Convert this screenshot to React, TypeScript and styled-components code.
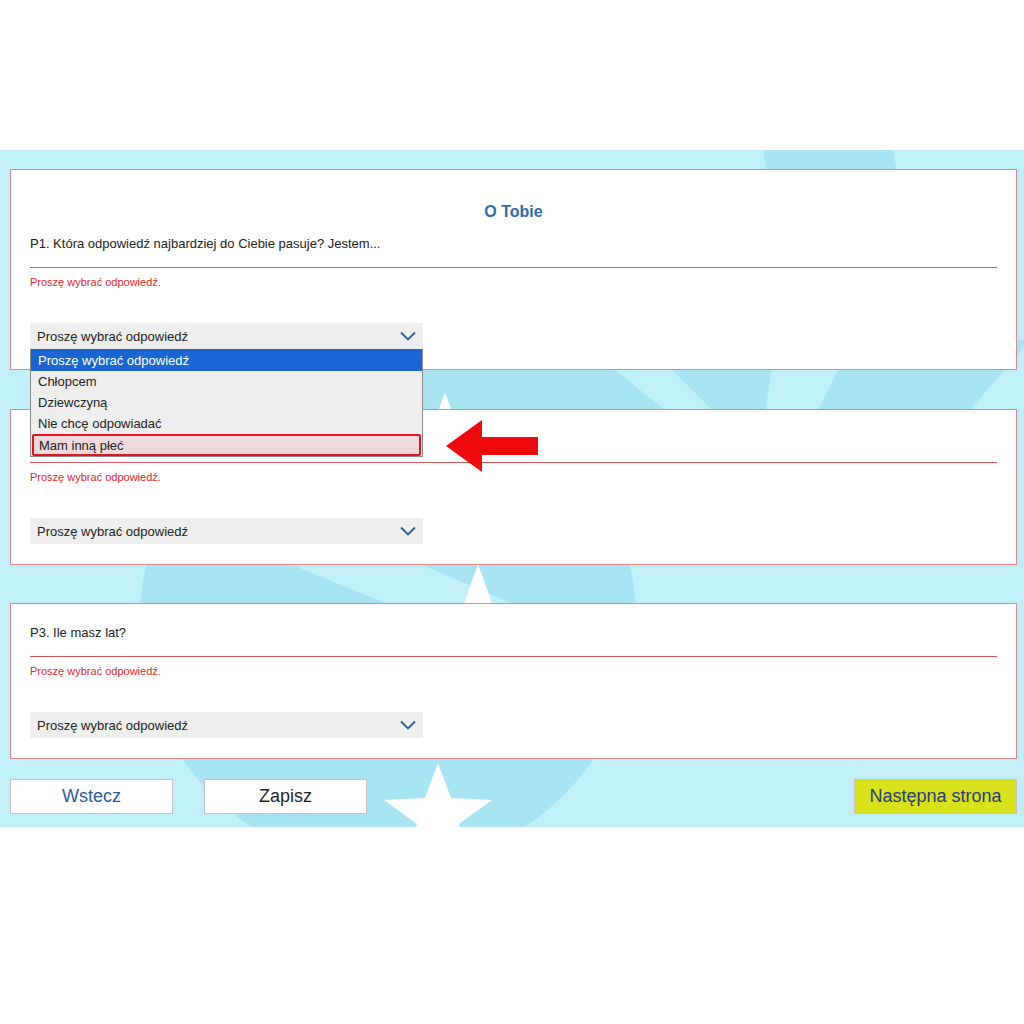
import React from "react";
import styled, { createGlobalStyle } from "styled-components";

const colors = {
  sky: "#c1effa",
  skyDark: "#a8e4f3",
  cardBorder: "#dc868d",
  divider: "#d9545c",
  error: "#e2282c",
  title: "#2f6ba8",
  text: "#222222",
  selectBg: "#eeeeee",
  chevron: "#2b5d97",
  optionActive: "#1a66d3",
};

const GlobalStyle = createGlobalStyle`
  html, body {
    margin: 0;
    padding: 0;
    background: #ffffff;
  }
  body {
    font-family: "Liberation Sans", Arial, sans-serif;
    color: ${colors.text};
  }
`;

const genderOptions = ["Chłopcem", "Dziewczyną", "Nie chcę odpowiadać", "Mam inną płeć"];

function Chevron() {
  return (
    <svg width="16" height="10" viewBox="0 0 16 10">
      <polyline
        points="1,1.5 8,8.5 15,1.5"
        fill="none"
        stroke={colors.chevron}
        strokeWidth="1.8"
      />
    </svg>
  );
}

function Backdrop() {
  // decorative background: soft blobs, light bands and white stars
  return (
    <BackdropSvg viewBox="0 0 1024 677" preserveAspectRatio="none">
      <polygon points="763,0 893,0 900,40 770,40" fill={colors.skyDark} />
      <polygon points="380,190 1030,190 968,262 380,262" fill={colors.skyDark} />
      <circle cx="388" cy="470" r="248" fill={colors.skyDark} />
      <polygon points="612,218 670,218 714,262 668,262" fill={colors.sky} />
      <polygon points="772,218 839,218 817,262 765,262" fill={colors.sky} />
      <polygon points="1010,218 1024,218 1024,262 972,262" fill={colors.sky} />
      <polygon points="285,412 415,412 516,455 390,455" fill={colors.sky} />
      <polygon points="445,242 438,262 452,262" fill="#ffffff" />
      <polygon points="478,414 463,456 493,456" fill="#ffffff" />
      <polygon
        points="438,613 451,648 492,650 459,674 471,714 438,690 405,714 417,674 384,650 425,648"
        fill="#ffffff"
      />
    </BackdropSvg>
  );
}

function SelectField({ open }: { open?: boolean }) {
  return (
    <SelectWrap>
      <SelectBox>
        <span>Proszę wybrać odpowiedź</span>
        <Chevron />
      </SelectBox>
      {open && (
        <OptionList>
          <Option $active>Proszę wybrać odpowiedź</Option>
          {genderOptions.map((o, i) => (
            <Option key={o} $marked={i === genderOptions.length - 1}>
              {o}
            </Option>
          ))}
        </OptionList>
      )}
    </SelectWrap>
  );
}

function Question({
  title,
  text,
  open,
}: {
  title?: string;
  text: string;
  open?: boolean;
}) {
  return (
    <Card>
      {title && <CardTitle>{title}</CardTitle>}
      <QuestionText>{text}</QuestionText>
      <Divider />
      <ErrorText>Proszę wybrać odpowiedź.</ErrorText>
      <SelectField open={open} />
    </Card>
  );
}

export default function App() {
  return (
    <>
      <GlobalStyle />
      <TopSpace />
      <Section>
        <Backdrop />
        <Content>
          <Cards>
            <Question
              title="O Tobie"
              text="P1. Która odpowiedź najbardziej do Ciebie pasuje? Jestem..."
              open
            />
            {/* question text of P2 sits under the open list */}
            <Question text={"\u00a0"} />
            <Question text="P3. Ile masz lat?" />
          </Cards>
          <ButtonRow>
            <NavButton $tone="back">Wstecz</NavButton>
            <NavButton $tone="save">Zapisz</NavButton>
            <NavButton $tone="next">Następna strona</NavButton>
          </ButtonRow>
        </Content>
        <Arrow width="92" height="52" viewBox="0 0 92 52">
          <polygon points="0,26 36,0 36,17 92,17 92,35 36,35 36,52" fill="#ee0a0a" />
        </Arrow>
      </Section>
    </>
  );
}

const TopSpace = styled.div`
  height: 150px;
  background: #ffffff;
`;

const Section = styled.section`
  position: relative;
  background: ${colors.sky};
  padding: 19px 7px 13px 10px;
  overflow: hidden;
`;

const BackdropSvg = styled.svg`
  position: absolute;
  inset: 0;
  width: 100%;
  height: 100%;
  z-index: 0;
`;

const Content = styled.div`
  position: relative;
  z-index: 1;
  display: flex;
  flex-direction: column;
`;

const Cards = styled.div`
  display: flex;
  flex-direction: column;
  gap: 39px;

  & > :last-child {
    margin-top: -1px;
  }
`;

const Card = styled.div`
  display: flex;
  flex-direction: column;
  background: #ffffff;
  border: 1px solid ${colors.cardBorder};
  padding: 21px 19px 20px 19px;
`;

const CardTitle = styled.h2`
  margin: 11px 0 14px;
  font-size: 16px;
  line-height: 20px;
  font-weight: 700;
  text-align: center;
  color: ${colors.title};
`;

const QuestionText = styled.div`
  font-size: 13px;
  line-height: 16px;
  color: ${colors.text};
  margin-bottom: 15px;
`;

const Divider = styled.div`
  height: 1px;
  background: ${colors.divider};
`;

const ErrorText = styled.div`
  margin-top: 7px;
  font-size: 11px;
  line-height: 14px;
  color: ${colors.error};
`;

const SelectWrap = styled.div`
  position: relative;
  width: 393px;
  margin-top: 34px;
`;

const SelectBox = styled.div`
  display: flex;
  align-items: center;
  justify-content: space-between;
  height: 26px;
  padding: 0 7px;
  background: ${colors.selectBg};
  font-size: 13px;
  color: ${colors.text};
`;

const OptionList = styled.div`
  position: absolute;
  top: 100%;
  left: 0;
  right: 0;
  z-index: 5;
  display: flex;
  flex-direction: column;
  background: ${colors.selectBg};
  border: 1px solid #8a8a8a;
  border-top: none;
`;

const Option = styled.div<{ $active?: boolean; $marked?: boolean }>`
  height: 21px;
  display: flex;
  align-items: center;
  font-size: 13px;
  padding-left: ${(p) => (p.$marked ? "5px" : "7px")};
  color: ${(p) => (p.$active ? "#ffffff" : colors.text)};
  background: ${(p) =>
    p.$active ? colors.optionActive : p.$marked ? "#f0d9dc" : "transparent"};
  ${(p) => p.$active && "height: 22px;"}
  ${(p) =>
    p.$marked &&
    `
    margin: 0 1px 0 1px;
    height: 22px;
    border: 2px solid #e3141e;
    border-radius: 2px;
    box-sizing: border-box;
  `}
`;

const ButtonRow = styled.div`
  display: flex;
  align-items: center;
  gap: 31px;
  margin-top: 20px;
`;

const toneStyles = {
  back: { bg: "#ffffff", fg: "#2c5b9f" },
  save: { bg: "#ffffff", fg: "#1f1f1f" },
  next: { bg: "#d8e11b", fg: "#2a3c7c" },
};

const NavButton = styled.button<{ $tone: keyof typeof toneStyles }>`
  width: 163px;
  height: 35px;
  box-sizing: border-box;
  border: 1px solid #c4c4c4;
  background: ${(p) => toneStyles[p.$tone].bg};
  color: ${(p) => toneStyles[p.$tone].fg};
  font-family: "Liberation Sans", Arial, sans-serif;
  font-size: 18px;
  padding: 0;
  cursor: pointer;
  ${(p) => p.$tone === "next" && "margin-left: auto;"}
`;

const Arrow = styled.svg`
  position: absolute;
  left: 446px;
  top: 270px;
  z-index: 6;
`;
